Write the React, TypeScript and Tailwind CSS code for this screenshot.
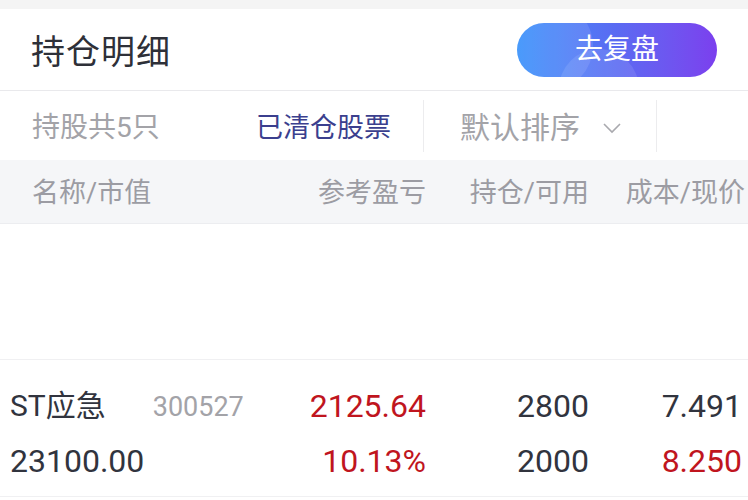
const font = {fontFamily: 'Roboto, "Noto Sans CJK SC", sans-serif'};

const Chevron = () => (
    <svg width="20" height="12" viewBox="0 0 20 12" fill="none" stroke="#a9a9ae" strokeWidth="1.6">
        <path d="M2 2 L10 10 L18 2"/>
    </svg>
);

const App = () => {
    return (
        <div className="w-[748px] h-[500px] overflow-hidden bg-white" style={font}>
            <div className="h-[9px] bg-[#f4f4f4]"/>

            {/* header */}
            <div className="h-[82px] flex items-center justify-between pl-[31px] pr-[31px] border-b border-[#e9e9ec]">
                <h1 className="pt-[4px] text-[34px] leading-none text-[#2e3038] tracking-[1px]">持仓明细</h1>
                <button
                    className="relative overflow-hidden w-[200px] h-[54px] rounded-full bg-gradient-to-r from-[#3590fa] via-[#5a6af2] to-[#7b3fee] text-white text-[28px] leading-none">
                    <span className="absolute -left-[14px] -top-[22px] w-[90px] h-[90px] rounded-full bg-white/10"/>
                    <span className="absolute left-[42px] top-[26px] w-[80px] h-[80px] rounded-full bg-white/10"/>
                    <span className="relative">去复盘</span>
                </button>
            </div>

            {/* tabs */}
            <div className="h-[69px] flex items-center">
                <div className="w-[256px] pl-[32px] pt-[5px] text-[28px] leading-none text-[#a3a3a8]">持股共5只</div>
                <div className="w-[167px] pt-[5px] text-[27px] leading-none text-[#3b3f8e]">已清仓股票</div>
                <div className="w-px h-[52px] bg-[#ececee]"/>
                <div className="w-[232px] pl-[36px] pt-[5px] flex items-center gap-[22px] text-[30px] leading-none text-[#a3a3a8]">
                    <span>默认排序</span>
                    <Chevron/>
                </div>
                <div className="w-px h-[52px] bg-[#ececee]"/>
            </div>

            {/* column header */}
            <div
                className="h-[64px] pt-[3px] grid grid-cols-[260px_166px_163px_156px] items-center bg-[#f5f6f8] border-b border-[#ecedf0] text-[27px] leading-none text-[#9c9ca3]">
                <div className="pl-[32px]">名称/市值</div>
                <div className="text-right">参考盈亏</div>
                <div className="text-right">持仓/可用</div>
                <div className="text-right whitespace-nowrap">成本/现价</div>
            </div>

            {/* empty area */}
            <div className="h-[136px] border-b border-[#f0f0f2]"/>

            {/* position row */}
            <div className="pl-[10px] pt-[19px] pb-[8px] border-b border-[#f0f0f2] text-[32px] text-[#31343e]">
                <div className="grid grid-cols-[250px_166px_163px_153px] leading-[54px]">
                    <div className="flex items-baseline">
                        <span className="text-[30px]">ST应急</span>
                        <span className="ml-[47px] text-[27px] text-[#a3a3a8]">300527</span>
                    </div>
                    <div className="text-right text-[#c0151e]">2125.64</div>
                    <div className="text-right">2800</div>
                    <div className="text-right">7.491</div>

                    <div>23100.00</div>
                    <div className="text-right text-[#c0151e]">10.13%</div>
                    <div className="text-right">2000</div>
                    <div className="text-right text-[#c0151e]">8.250</div>
                </div>
            </div>
        </div>
    );
};

export default App;
